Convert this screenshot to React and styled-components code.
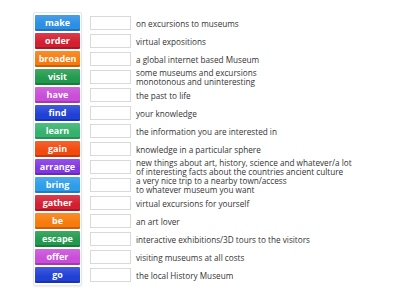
import React from 'react'
import styled, { createGlobalStyle } from 'styled-components'

const items = [
  { word: 'make', color: '#2b8fe3', text: ['on excursions to museums'] },
  { word: 'order', color: '#d31f30', text: ['virtual expositions'] },
  { word: 'broaden', color: '#f77b0c', text: ['a global internet based Museum'] },
  { word: 'visit', color: '#219a4d', text: ['some museums and excursions', 'monotonous and uninteresting'] },
  { word: 'have', color: '#c94dd8', text: ['the past to life'] },
  { word: 'find', color: '#2141d6', text: ['your knowledge'] },
  { word: 'learn', color: '#34b26e', text: ['the information you are interested in'] },
  { word: 'gain', color: '#f24a0e', text: ['knowledge in a particular sphere'] },
  { word: 'arrange', color: '#8136e2', text: ['new things about art, history, science and whatever/a lot', 'of interesting facts about the countries ancient culture'] },
  { word: 'bring', color: '#2c9de9', text: ['a very nice trip to a nearby town/access', 'to whatever museum you want'] },
  { word: 'gather', color: '#d31f30', text: ['virtual excursions for yourself'] },
  { word: 'be', color: '#f77b0c', text: ['an art lover'] },
  { word: 'escape', color: '#219a4d', text: ['interactive exhibitions/3D tours to the visitors'] },
  { word: 'offer', color: '#c94dd8', text: ['visiting museums at all costs'] },
  { word: 'go', color: '#2141d6', text: ['the local History Museum'] },
]

const App = () => {
  return (
    <>
      <GlobalStyle />
      <Page>
        <Card>
          {items.map(item => (
            <Tile key={item.word} $color={item.color}>{item.word}</Tile>
          ))}
        </Card>

        <Rows>
          {items.map(item => (
            <Row key={item.word}>
              <Slot />
              <Phrase>
                {item.text.map(line => <span key={line}>{line}</span>)}
              </Phrase>
            </Row>
          ))}
        </Rows>
      </Page>
    </>
  )
}

export default App

const GlobalStyle = createGlobalStyle`
  html, body {
    margin: 0;
    padding: 0;
    background: #fff;
    width: 400px;
    height: 300px;
    overflow: hidden;
  }
`

const Page = styled.div`
  display: flex;
  align-items: flex-start;
  padding: 12px 0 0 33px;
  font-family: 'Open Sans', 'Liberation Sans', sans-serif;
`

const Card = styled.div`
  display: flex;
  flex-direction: column;
  gap: 2px;
  padding: 2px 1px;
  background: #fff;
  border: 1px solid #e3e6ec;
  border-radius: 2px;
  box-shadow: 0 1px 2px rgba(0, 0, 0, 0.08);
`

const Tile = styled.div`
  width: 45px;
  height: 16px;
  display: flex;
  align-items: center;
  justify-content: center;
  background-color: ${({ $color }) => $color};
  background-image: linear-gradient(rgba(255, 255, 255, 0.14), rgba(255, 255, 255, 0) 60%);
  color: #fff;
  font-size: 9px;
  font-weight: 700;
  border-radius: 1px;
  box-shadow: inset 0 -2px 0 rgba(0, 0, 0, 0.2);
  padding-bottom: 1px;
  box-sizing: border-box;
`

const Rows = styled.div`
  display: flex;
  flex-direction: column;
  gap: 2px;
  padding-top: 3px;
  margin-left: 8px;
`

const Row = styled.div`
  height: 16px;
  display: flex;
  align-items: center;
`

const Slot = styled.div`
  width: 41px;
  height: 14px;
  flex-shrink: 0;
  box-sizing: border-box;
  border: 1px solid #d9d9d9;
  background: #fff;
`

const Phrase = styled.div`
  display: flex;
  flex-direction: column;
  margin-left: 5px;
  font-size: 8.2px;
  line-height: 9px;
  color: #333;
  white-space: nowrap;
`
